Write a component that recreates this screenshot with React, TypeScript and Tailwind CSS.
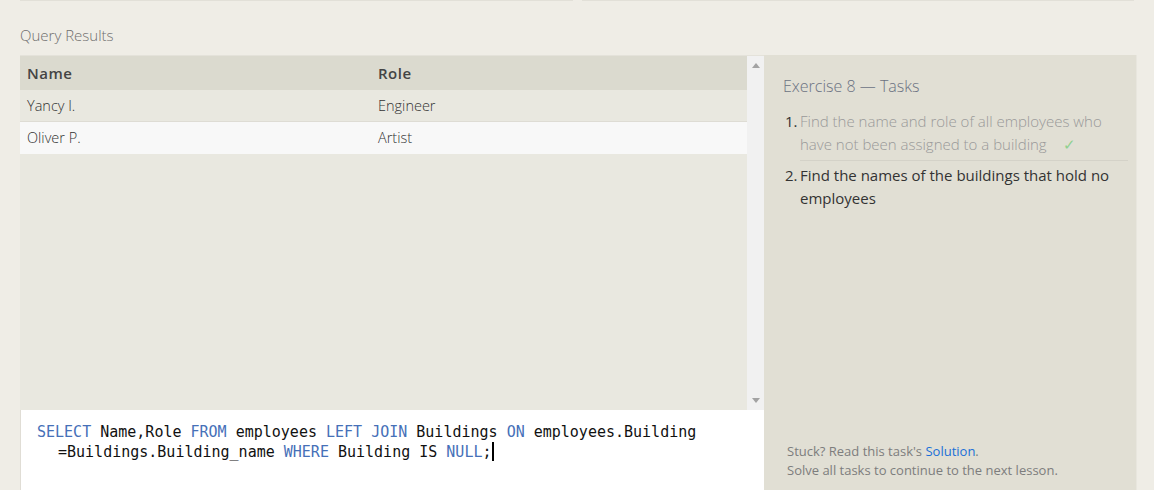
const rows = [
  { name: "Yancy I.", role: "Engineer" },
  { name: "Oliver P.", role: "Artist" },
];

function Keyword({ children }: { children: React.ReactNode }) {
  return <span className="text-[#4670b8]">{children}</span>;
}

export default function App() {
  return (
    <div className="w-[1154px] h-[490px] overflow-hidden bg-[#efede6] font-['Open_Sans',sans-serif]">
      {/* bottoms of the inputs above */}
      <div className="flex gap-[9px] px-[20px]">
        <div className="h-px w-[554px] bg-[#e2e0d8]" />
        <div className="h-px w-[554px] bg-[#e2e0d8]" />
      </div>

      <div className="px-[20px] pt-[23px] h-[54px] text-[15px] font-light text-[#6f6f6f]">
        Query Results
      </div>

      <div className="flex pl-[20px]">
        <div className="w-[744px] flex flex-col">
          <div className="flex h-[355px] border-t border-[#e4e2da]">
            <div className="w-[727px] bg-[#e9e8e0] flex flex-col">
              <div className="flex h-[34px] items-center bg-[#dbdacf] text-[15px] font-semibold tracking-[0.5px] text-[#444]">
                <div className="w-[351px] pl-[7px]">Name</div>
                <div className="pl-[7px]">Role</div>
              </div>
              {rows.map((r, i) => (
                <div
                  key={r.name}
                  className={
                    i % 2 === 0
                      ? "flex h-[32px] items-center bg-[#e9e8e0] border-b border-[#dedcd4] text-[14.5px] font-light text-[#333]"
                      : "flex h-[32px] items-center bg-[#f8f8f8] text-[14.5px] font-light text-[#333]"
                  }
                >
                  <div className="w-[351px] pl-[7px]">{r.name}</div>
                  <div className="pl-[7px]">{r.role}</div>
                </div>
              ))}
            </div>
            <div className="w-[17px] bg-[#f1f1f1] flex flex-col items-center justify-between py-[7px]">
              <svg width="8" height="5" viewBox="0 0 8 5">
                <path d="M0 5 L4 0 L8 5 Z" fill="#a3a3a3" />
              </svg>
              <svg width="8" height="5" viewBox="0 0 8 5">
                <path d="M0 0 L4 5 L8 0 Z" fill="#a3a3a3" />
              </svg>
            </div>
          </div>
          <div className="h-[80px] bg-white border-l border-[#e0ddd5] pl-[16px] pt-[12px] font-['DejaVu_Sans_Mono',monospace] text-[15px] leading-[20px] text-[#111]">
            <div>
              <Keyword>SELECT</Keyword> Name,Role <Keyword>FROM</Keyword> employees <Keyword>LEFT JOIN</Keyword> Buildings <Keyword>ON</Keyword> employees.Building
            </div>
            <div className="pl-[21px]">
              =Buildings.Building_name <Keyword>WHERE</Keyword> Building IS <Keyword>NULL</Keyword>;
              <span className="inline-block w-[2px] h-[19px] bg-black align-middle -mt-[2px]" />
            </div>
          </div>
        </div>

        <div className="w-[373px] h-[435px] bg-[#e1dfd4] border-r border-[#e8e6de] flex flex-col justify-between pl-[19px] pr-[8px]">
          <div>
            <div className="pt-[19px] text-[16px] font-light text-[#6b7282]">Exercise 8 — Tasks</div>
            <ol className="mt-[12px] text-[15px] leading-[23px]">
              <li className="flex pb-[3px]">
                <span className="w-[17px] shrink-0 pl-[2px] text-[#333]">1.</span>
                <span className="border-b border-[#d4d2c8] pb-[4px] font-light text-[#999]">
                  Find the name and role of all employees who have not been assigned to a building
                  <span className="ml-[16px] text-[#8fd18f]">✓</span>
                </span>
              </li>
              <li className="flex">
                <span className="w-[17px] shrink-0 pl-[2px] text-[#333]">2.</span>
                <span className="text-[#333]">Find the names of the buildings that hold no employees</span>
              </li>
            </ol>
          </div>
          <div className="pb-[10px] pl-[4px] text-[13px] leading-[19px] text-[#7d7d7d]">
            <div>
              Stuck? Read this task's <span className="text-[#1a6fd8]">Solution</span>.
            </div>
            <div>Solve all tasks to continue to the next lesson.</div>
          </div>
        </div>
      </div>
    </div>
  );
}
